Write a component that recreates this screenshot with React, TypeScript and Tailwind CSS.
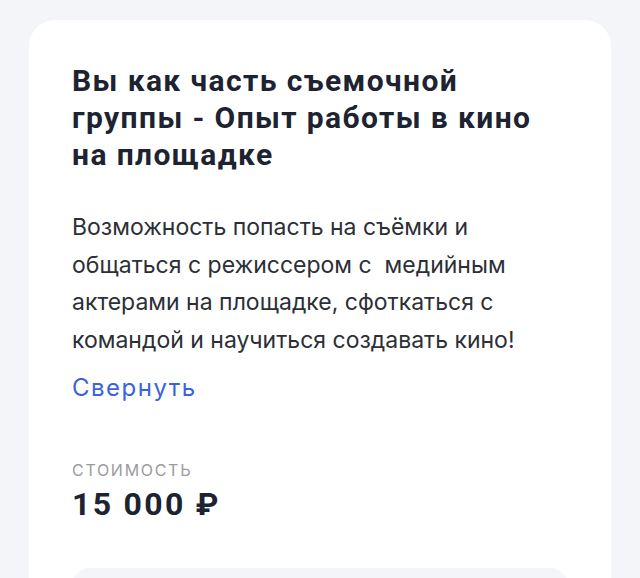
export default function App() {
  return (
    <div className="min-h-screen bg-[#f4f5f8] pt-5 px-[29px] [font-family:Inter,'Noto_Sans',sans-serif]">
      <div className="bg-white rounded-t-[26px] px-[43px] pt-[42px] h-[600px] overflow-hidden">
        <h1 className="font-['Roboto',sans-serif] font-bold text-[30px] leading-[37px] tracking-[1.4px] text-[#1d2331]">
          Вы как часть съемочной
          <br />
          группы - Опыт работы в кино
          <br />
          на площадке
        </h1>

        <p className="mt-[36px] text-[23px] leading-[37.5px] text-[#2c2f36]">
          Возможность попасть на съёмки и
          <br />
          общаться с режиссером с&nbsp; медийным
          <br />
          актерами на площадке, сфоткаться с
          <br />
          командой и научиться создавать кино!
        </p>

        <button className="mt-[10px] text-[24px] leading-[37px] tracking-[1.5px] text-[#3b62dc] cursor-pointer">
          Свернуть
        </button>

        <div className="mt-[54px] text-[16px] leading-5 uppercase tracking-[1.7px] text-[#9b9b9e]">стоимость</div>
        <div className="mt-[5px] font-['Roboto',sans-serif] font-bold text-[32px] leading-[38px] tracking-[2.3px] text-[#1d2331]">
          15 000 ₽
        </div>

        <div className="mt-[45px] h-[80px] rounded-[18px] bg-[#f4f5f8]" />
      </div>
    </div>
  );
}
